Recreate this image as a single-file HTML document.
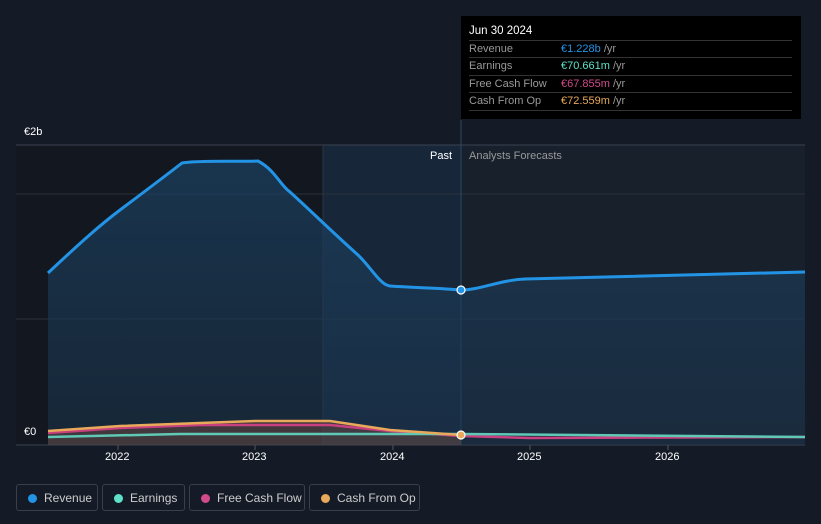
<!DOCTYPE html>
<html><head><meta charset="utf-8"><style>
body{margin:0;background:#151b26;width:821px;height:524px;overflow:hidden;font-family:"Liberation Sans",sans-serif;position:relative}
.tt{position:absolute;left:461px;top:16px;width:340px;height:103px;background:#000;color:#fff;font-size:11px}
.tt .h{position:absolute;left:8px;top:9px;font-size:11.5px}
.row{position:absolute;left:8px;width:323px;height:17px;border-top:1px solid #333;line-height:17px;color:#999}
.row span{position:absolute;left:92px}
.leg{position:absolute;top:484px;height:27px;border:1px solid #3a3f4a;border-radius:3px;color:#ccc;font-size:12px;line-height:27px;box-sizing:border-box}
.leg i{position:absolute;left:11px;top:9px;width:9px;height:9px;border-radius:50%}
.leg b{font-weight:normal;position:absolute;left:27px}
.ax{position:absolute;color:#fff;font-size:11px}
</style></head><body>
<svg width="821" height="524" style="position:absolute;left:0;top:0">
<defs><linearGradient id="g" x1="0" y1="0" x2="0" y2="1"><stop offset="0" stop-color="#1b4060" stop-opacity=".9"/><stop offset="1" stop-color="#1b3650" stop-opacity=".6"/></linearGradient></defs>
<rect x="16" y="145" width="307" height="300" fill="#131820"/>
<rect x="323" y="145" width="138" height="300" fill="#172638"/>
<rect x="461" y="145" width="344" height="300" fill="#18202c"/>
<line x1="16" y1="145" x2="805" y2="145" stroke="#3a4250"/>
<line x1="16" y1="194" x2="805" y2="194" stroke="#2a313c"/>
<line x1="16" y1="319" x2="805" y2="319" stroke="#2a313c"/>
<line x1="16" y1="445" x2="805" y2="445" stroke="#3a4250"/>
<line x1="323" y1="145" x2="323" y2="445" stroke="#2a3545"/>
<line x1="461" y1="120" x2="461" y2="445" stroke="#2a4a66"/>
<path d="M48,273 C80,243 100,225 120,210 C140,195 160,180 182,163 C200,160 240,162 258,161 C275,170 280,185 290,192 C310,210 330,230 358,255 C370,266 380,285 390,286 C420,288 440,288 461,290 C480,290 500,280 525,279 L805,272 L805,445 L48,445Z" fill="url(#g)" opacity=".8"/>
<path d="M48,273 C80,243 100,225 120,210 C140,195 160,180 182,163 C200,160 240,162 258,161 C275,170 280,185 290,192 C310,210 330,230 358,255 C370,266 380,285 390,286 C420,288 440,288 461,290 C480,290 500,280 525,279 L805,272" fill="none" stroke="#2394e5" stroke-width="3"/>
<path d="M48,431 L120,426 L200,423 L255,421 L330,421 L390,430 L461,435 L461,445 L48,445Z" fill="#6a4a40" opacity=".5"/>
<path d="M48,433 L120,428 L200,425 L330,425 L390,431 L461,436 L530,438 L805,437" fill="none" stroke="#c8407f" stroke-width="2.5"/>
<path d="M48,437 L180,434 L330,434 L461,434 L805,437" fill="none" stroke="#5fc9b5" stroke-width="2.5"/>
<path d="M48,431 L120,426 L200,423 L255,421 L330,421 L390,430 L461,435" fill="none" stroke="#e8a95a" stroke-width="2.5"/>
<circle cx="461" cy="290" r="4" fill="#2394e5" stroke="#fff" stroke-width="1.2"/>
<circle cx="461" cy="435" r="4" fill="#e8a95a" stroke="#fff" stroke-width="1.2"/>
<line x1="118" y1="445" x2="118" y2="450" stroke="#555"/><line x1="255" y1="445" x2="255" y2="450" stroke="#555"/><line x1="393" y1="445" x2="393" y2="450" stroke="#555"/><line x1="530" y1="445" x2="530" y2="450" stroke="#555"/><line x1="668" y1="445" x2="668" y2="450" stroke="#555"/>
</svg>
<div class="ax" style="left:24px;top:126px">€2b</div>
<div class="ax" style="left:24px;top:426px">€0</div>
<div class="ax" style="left:430px;top:150px">Past</div>
<div class="ax" style="left:469px;top:150px;color:#999">Analysts Forecasts</div>
<div class="ax" style="left:105px;top:451px">2022</div>
<div class="ax" style="left:242px;top:451px">2023</div>
<div class="ax" style="left:380px;top:451px">2024</div>
<div class="ax" style="left:517px;top:451px">2025</div>
<div class="ax" style="left:655px;top:451px">2026</div>
<div class="tt"><div class="h">Jun 30 2024</div>
<div class="row" style="top:24px">Revenue<span><em style="font-style:normal;color:#2394e5">€1.228b</em> /yr</span></div>
<div class="row" style="top:41px">Earnings<span><em style="font-style:normal;color:#5fe0c8">€70.661m</em> /yr</span></div>
<div class="row" style="top:59px">Free Cash Flow<span><em style="font-style:normal;color:#d04a8c">€67.855m</em> /yr</span></div>
<div class="row" style="top:76px">Cash From Op<span><em style="font-style:normal;color:#e8a95a">€72.559m</em> /yr</span></div>
<div class="row" style="top:94px;height:0"></div>
</div>
<div class="leg" style="left:16px;width:82px"><i style="background:#2394e5"></i><b>Revenue</b></div>
<div class="leg" style="left:102px;width:83px"><i style="background:#5fe0c8"></i><b>Earnings</b></div>
<div class="leg" style="left:189px;width:116px"><i style="background:#d04a8c"></i><b>Free Cash Flow</b></div>
<div class="leg" style="left:309px;width:111px"><i style="background:#e8a95a"></i><b>Cash From Op</b></div>
</body></html>
